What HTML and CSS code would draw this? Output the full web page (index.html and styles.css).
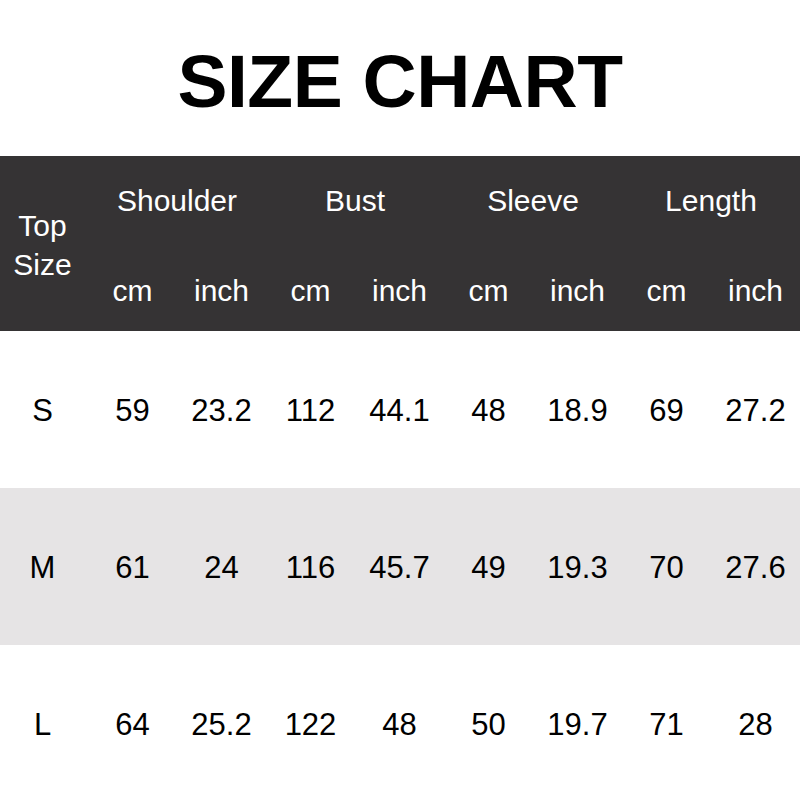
FILE: index.html
```html
<!DOCTYPE html>
<html>
<head>
<meta charset="utf-8">
<link rel="stylesheet" href="styles.css">
</head>
<body>
<div class="page">
  <h1 class="title">SIZE CHART</h1>
  <div class="head">
    <div class="corner">Top<br>Size</div>
    <div class="group">Shoulder</div>
    <div class="group">Bust</div>
    <div class="group">Sleeve</div>
    <div class="group">Length</div>
    <div class="unit">cm</div><div class="unit">inch</div>
    <div class="unit">cm</div><div class="unit">inch</div>
    <div class="unit">cm</div><div class="unit">inch</div>
    <div class="unit">cm</div><div class="unit">inch</div>
  </div>
  <div class="row">
    <div>S</div><div>59</div><div>23.2</div><div>112</div><div>44.1</div><div>48</div><div>18.9</div><div>69</div><div>27.2</div>
  </div>
  <div class="row alt">
    <div>M</div><div>61</div><div>24</div><div>116</div><div>45.7</div><div>49</div><div>19.3</div><div>70</div><div>27.6</div>
  </div>
  <div class="row">
    <div>L</div><div>64</div><div>25.2</div><div>122</div><div>48</div><div>50</div><div>19.7</div><div>71</div><div>28</div>
  </div>
</div>
</body>
</html>
```
FILE: styles.css
```css
* { box-sizing: border-box; }
html, body { margin: 0; padding: 0; background: #fff; }
body { font-family: "Liberation Sans", Arial, sans-serif; }
.page { width: 800px; height: 800px; overflow: hidden; }
.title {
  margin: 0;
  height: 156px;
  display: flex;
  align-items: center;
  justify-content: center;
  font-size: 75px;
  font-weight: bold;
  color: #000;
  padding-top: 6px;
  letter-spacing: -0.5px;
}
.head {
  height: 175px;
  background: #353334;
  color: #fff;
  display: grid;
  grid-template-columns: 88px repeat(8, 1fr);
  grid-template-rows: 88px 87px;
  font-size: 30px;
}
.head > div { display: flex; align-items: center; justify-content: center; }
.corner {
  grid-row: 1 / 3;
  line-height: 39px;
  text-align: center;
  padding-top: 2px;
  padding-right: 3px;
}
.group { grid-column: span 2; padding-top: 2px; }
.unit { padding-top: 6px; }
.row {
  height: 157px;
  display: grid;
  grid-template-columns: 88px repeat(8, 1fr);
  font-size: 31px;
  color: #000;
  padding-top: 3px;
}
.row > div { display: flex; align-items: center; justify-content: center; }
.row > div:first-child { padding-right: 3px; }
.row.alt { background: #e6e4e5; }
```
